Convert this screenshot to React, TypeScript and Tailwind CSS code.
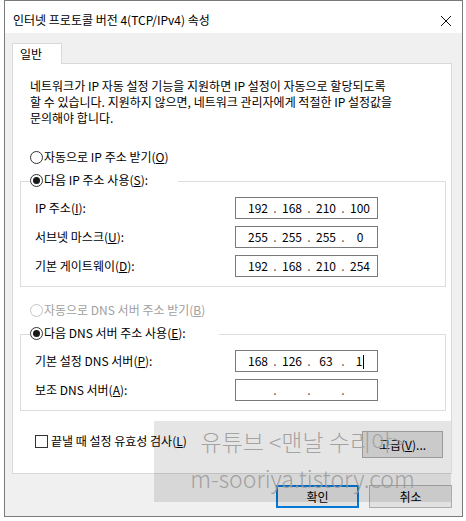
import React from "react";

function Radio({
  checked,
  disabled,
  children,
}: {
  checked?: boolean;
  disabled?: boolean;
  children: React.ReactNode;
}) {
  return (
    <div className="flex items-center h-[16px]">
      <span
        className={`w-[13px] h-[13px] rounded-full border bg-white flex items-center justify-center ${
          disabled ? "border-[#c4c4c4]" : "border-[#333333]"
        }`}
      >
        {checked && <span className="w-[7px] h-[7px] rounded-full bg-[#1a1a1a]" />}
      </span>
      <span className={`ml-[1px] ${disabled ? "text-[#a0a0a0]" : "text-black"}`}>
        {children}
      </span>
    </div>
  );
}

function IpBox({ parts, caret }: { parts: string[]; caret?: boolean }) {
  return (
    <div className="w-[143px] h-[22px] border border-[#7a7a7a] bg-white flex items-center pl-[9px]">
      {parts.map((p, i) => (
        <React.Fragment key={i}>
          <span className="w-[26px] text-center text-black">
            {p}
            {caret && i === 3 && (
              <span className="inline-block w-px h-[14px] bg-black align-middle ml-px" />
            )}
          </span>
          {i < 3 && <span className="w-[8px] text-center text-[#555]">.</span>}
        </React.Fragment>
      ))}
    </div>
  );
}

function Row({ label, children }: { label: React.ReactNode; children: React.ReactNode }) {
  return (
    <div className="flex items-center h-[22px]">
      <div className="w-[200px]">{label}</div>
      {children}
    </div>
  );
}

export default function App() {
  return (
    <div className="relative w-[466px] h-[521px] bg-white pl-[4px] text-[12px] leading-[16px] text-black font-['Noto_Sans_CJK_KR','Malgun_Gothic',sans-serif]">
      {/* Window */}
      <div className="w-[459px] h-[517px] border border-[#7a7a7a] bg-[#f0f0f0] flex flex-col">
        {/* Title bar */}
        <div className="h-[32px] bg-white flex items-start justify-between pl-[8px] pr-[10px] pt-[11px]">
          <span>인터넷 프로토콜 버전 4(TCP/IPv4) 속성</span>
          <svg width="12" height="12" viewBox="0 0 12 12" className="mt-[3px]">
            <path d="M1 1 L11 11 M11 1 L1 11" stroke="#111" strokeWidth="1" fill="none" />
          </svg>
        </div>

        {/* Client */}
        <div className="pl-[7px] pt-[10px]">
          <div className="relative z-10 w-[50px] h-[21px] -mb-px bg-white border border-b-0 border-[#d9d9d9] pl-[7px] pt-[2px]">
            일반
          </div>
          <div className="w-[440px] h-[411px] bg-white border border-[#d9d9d9] px-[7px] pt-[14px]">
            <p className="pl-[10px] whitespace-nowrap">
              네트워크가 IP 자동 설정 기능을 지원하면 IP 설정이 자동으로 할당되도록
              <br />
              할 수 있습니다. 지원하지 않으면, 네트워크 관리자에게 적절한 IP 설정값을
              <br />
              문의해야 합니다.
            </p>

            <div className="pl-[10px] mt-[23px]">
              <Radio>
                자동으로 IP 주소 받기(<u>O</u>)
              </Radio>
            </div>

            {/* IP group */}
            <div className="mt-[16px] w-[426px] border border-[#dcdcdc] pb-[9px]">
              <div className="-mt-[10px] ml-[9px] w-fit bg-white pr-[30px]">
                <Radio checked>
                  다음 IP 주소 사용(<u>S</u>):
                </Radio>
              </div>
              <div className="pl-[14px] mt-[9px] flex flex-col gap-[7px]">
                <Row label={<>IP 주소(<u>I</u>):</>}>
                  <IpBox parts={["192", "168", "210", "100"]} />
                </Row>
                <Row label={<>서브넷 마스크(<u>U</u>):</>}>
                  <IpBox parts={["255", "255", "255", "0"]} />
                </Row>
                <Row label={<>기본 게이트웨이(<u>D</u>):</>}>
                  <IpBox parts={["192", "168", "210", "254"]} />
                </Row>
              </div>
            </div>

            <div className="pl-[10px] mt-[15px]">
              <Radio disabled>
                자동으로 DNS 서버 주소 받기(<u>B</u>)
              </Radio>
            </div>

            {/* DNS group */}
            <div className="mt-[16px] w-[426px] border border-[#dcdcdc] pb-[9px]">
              <div className="-mt-[10px] ml-[9px] w-fit bg-white pr-[33px]">
                <Radio checked>
                  다음 DNS 서버 주소 사용(<u>E</u>):
                </Radio>
              </div>
              <div className="pl-[14px] mt-[9px] flex flex-col gap-[7px]">
                <Row label={<>기본 설정 DNS 서버(<u>P</u>):</>}>
                  <IpBox parts={["168", "126", "63", "1"]} caret />
                </Row>
                <Row label={<>보조 DNS 서버(<u>A</u>):</>}>
                  <IpBox parts={["", "", "", ""]} />
                </Row>
              </div>
            </div>

            {/* Validate + advanced */}
            <div className="mt-[20px] w-[423px] flex items-start justify-between">
              <div className="ml-[15px] mt-[2px] flex items-center h-[16px]">
                <span className="w-[13px] h-[13px] border border-[#333333] bg-white" />
                <span className="ml-[3px]">
                  끝낼 때 설정 유효성 검사(<u>L</u>)
                </span>
              </div>
              <button className="w-[81px] h-[27px] border border-[#adadad] bg-[#e1e1e1] text-black">
                고급(<u>V</u>)...
              </button>
            </div>
          </div>

          {/* OK / Cancel */}
          <div className="w-[440px] mt-[11px] flex justify-end gap-[10px]">
            <button className="w-[83px] h-[23px] border-2 border-[#0078d7] bg-[#e1e1e1] text-black">
              확인
            </button>
            <button className="w-[83px] h-[23px] border border-[#adadad] bg-[#e1e1e1] text-black">
              취소
            </button>
          </div>
        </div>
      </div>

      {/* Watermark overlay */}
      <div className="absolute left-[154px] top-[421px] w-[297px] h-[81px] bg-black/10 flex flex-col items-center pt-[2px] text-[23px] leading-[37px] font-light text-[#9a9a9a]/90">
        <span className="whitespace-nowrap">유튜브 &lt;맨날 수리야&gt;</span>
        <span className="whitespace-nowrap">m-sooriya.tistory.com</span>
      </div>
    </div>
  );
}
